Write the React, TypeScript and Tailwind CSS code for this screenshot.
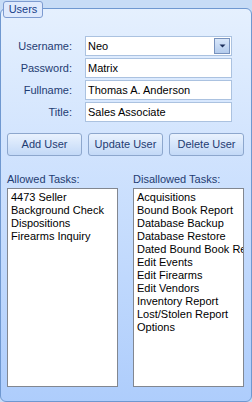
import React from "react";

const ALLOWED = ["4473 Seller", "Background Check", "Dispositions", "Firearms Inquiry"];

const DISALLOWED = [
  "Acquisitions",
  "Bound Book Report",
  "Database Backup",
  "Database Restore",
  "Dated Bound Book Report",
  "Edit Events",
  "Edit Firearms",
  "Edit Vendors",
  "Inventory Report",
  "Lost/Stolen Report",
  "Options",
];

const FIELDS = [
  { label: "Password:", value: "Matrix" },
  { label: "Fullname:", value: "Thomas A. Anderson" },
  { label: "Title:", value: "Sales Associate" },
];

function TaskList({ title, items }: { title: string; items: string[] }) {
  return (
    <div className="flex w-[111px] flex-col">
      <span className="leading-[13px] text-[#1f3c72]">{title}</span>
      <ul className="mt-[2px] h-[199px] overflow-hidden border border-[#828790] bg-white pl-[3px] pt-[2px]">
        {items.map((item) => (
          <li key={item} className="whitespace-nowrap leading-[13px] text-black">
            {item}
          </li>
        ))}
      </ul>
    </div>
  );
}

function Btn({ children }: { children: React.ReactNode }) {
  return (
    <button
      type="button"
      className="h-[23px] w-[75px] rounded-[3px] border border-[#8da7cd] bg-gradient-to-b from-[#e9f2fe] to-[#c3d9f7] text-[#1f3c72]"
    >
      {children}
    </button>
  );
}

export default function App() {
  return (
    <div
      className="relative h-[402px] w-[252px] bg-[#c7dcf6] pt-[8px] text-[11px]"
      style={{ fontFamily: '"Liberation Sans", Arial, sans-serif' }}
    >
      <div className="h-[394px] rounded-[6px] border border-[#6f98d0] bg-gradient-to-b from-[#e5f0fe] to-[#aecdfc]">
        <div className="grid grid-cols-[71px_147px] gap-x-[13px] gap-y-[2px] pt-[27px]">
          <span className="self-center text-right text-[#1f3c72]">Username:</span>
          <div className="flex h-[20px] items-center border border-[#abc2e0] bg-white pl-[2px] pr-[1px]">
            <span className="flex-1 text-black">Neo</span>
            <span className="flex h-[16px] w-[16px] items-center justify-center border border-[#7892bd] bg-gradient-to-b from-[#d9e7fa] to-[#b4cced]">
              <svg width="7" height="4" viewBox="0 0 7 4">
                <path d="M0.5 0.5h6L3.5 3.5z" fill="#1c2f5c" />
              </svg>
            </span>
          </div>
          {FIELDS.map((f) => (
            <React.Fragment key={f.label}>
              <span className="self-center text-right text-[#1f3c72]">{f.label}</span>
              <div className="flex h-[20px] items-center border border-[#abc2e0] bg-white pl-[2px] text-black">
                {f.value}
              </div>
            </React.Fragment>
          ))}
        </div>
        <div className="mt-[11px] flex gap-[6px] pl-[6px]">
          <Btn>Add User</Btn>
          <Btn>Update User</Btn>
          <Btn>Delete User</Btn>
        </div>
        <div className="mt-[17px] flex gap-[15px] pl-[6px]">
          <TaskList title="Allowed Tasks:" items={ALLOWED} />
          <TaskList title="Disallowed Tasks:" items={DISALLOWED} />
        </div>
      </div>
      <div className="absolute left-[3px] top-[1px] flex h-[17px] w-[40px] items-center justify-center rounded-[3px] border border-[#7d9bd0] bg-[#dfeafd] text-[11px] text-[#18408a]">
        Users
      </div>
    </div>
  );
}
